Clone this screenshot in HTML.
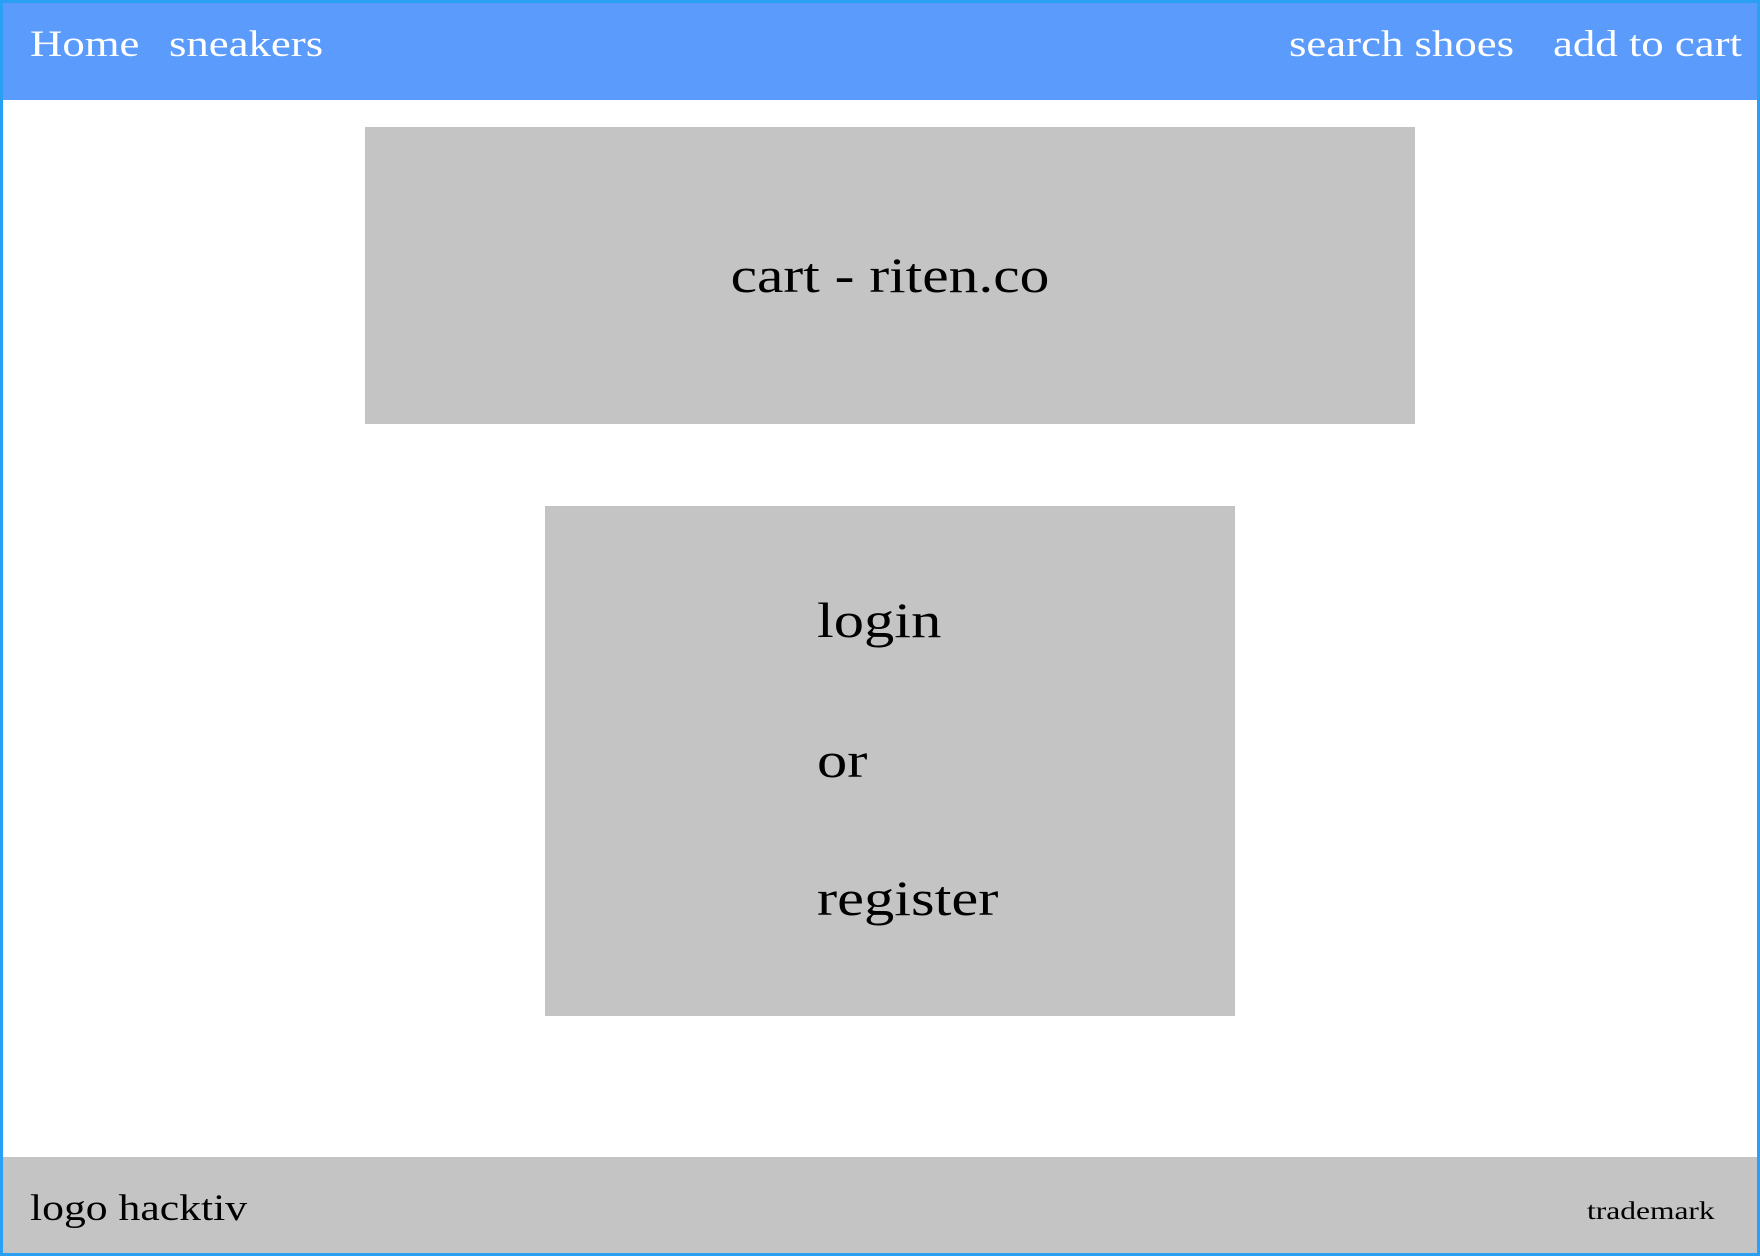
<!DOCTYPE html>
<html><head><meta charset="utf-8"><style>
*{margin:0;padding:0;box-sizing:border-box}
body{width:1760px;height:1256px;overflow:hidden;background:#fff;font-family:"Liberation Serif",serif;position:relative}
.frame{position:absolute;left:0;top:0;width:1760px;height:1256px;border:3px solid #2aa0f5}
.hdr{position:absolute;left:0;top:0;width:1760px;height:100px;background:#5b9bfb}
.t{position:absolute;white-space:nowrap;line-height:1;transform:scaleX(1.21);transform-origin:left center}
.nav{color:#fff;font-size:37px;top:26px}
.box{position:absolute;background:#c4c4c4}
.big{font-size:50px;color:#000}
.ftr{position:absolute;left:3px;top:1157px;width:1754px;height:96px;background:#c4c4c4}
</style></head><body>
<div class="hdr"></div>
<div class="t nav" style="left:30px">Home</div>
<div class="t nav" style="left:169px">sneakers</div>
<div class="t nav" style="left:1289px">search shoes</div>
<div class="t nav" style="left:1553px">add to cart</div>
<div class="box" style="left:365px;top:127px;width:1050px;height:297px"></div>
<div class="t big" style="left:365px;width:1050px;text-align:center;top:250px;transform-origin:center center;transform:scaleX(1.19)">cart - riten.co</div>
<div class="box" style="left:545px;top:506px;width:690px;height:510px"></div>
<div class="t big" style="left:817px;top:595px">login</div>
<div class="t big" style="left:817px;top:735px">or</div>
<div class="t big" style="left:817px;top:873px">register</div>
<div class="ftr"></div>
<div class="t" style="left:30px;top:1190px;font-size:37px;transform:scaleX(1.18)">logo hacktiv</div>
<div class="t" style="left:1587px;top:1199px;font-size:25px;transform:scaleX(1.26)">trademark</div>
<div class="frame"></div>
</body></html>
